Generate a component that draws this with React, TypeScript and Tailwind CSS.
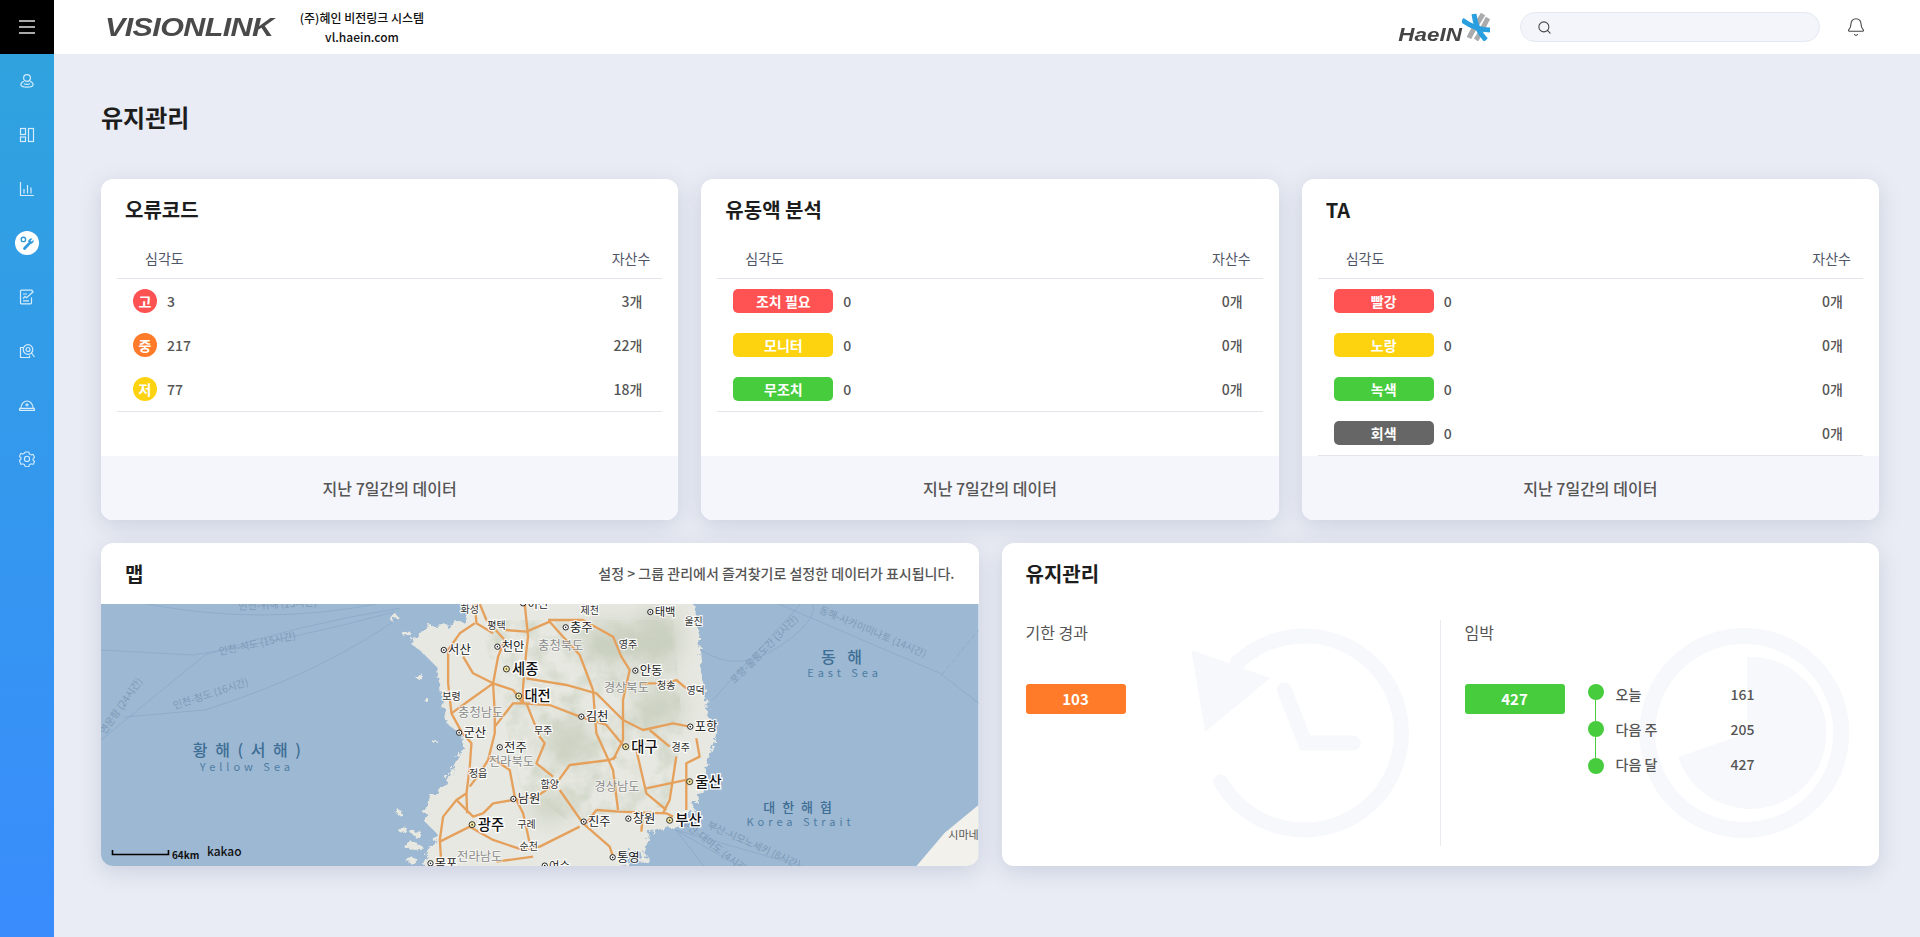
import { Bell, Search } from "lucide-react";

const RED = "bg-[#ff5252]";
const ORANGE = "bg-[#ff7a29]";
const YELLOW = "bg-[#fdd310]";
const GREEN = "bg-[#47cc3e]";
const GRAY = "bg-[#666666]";

const navIcon = "w-[16px] h-[16px] text-[#d5ecfb]";

const SideIcons = [
  <svg key="user" viewBox="0 0 16 16" className={navIcon} fill="none" stroke="currentColor" strokeWidth="1.2">
    <circle cx="8" cy="5" r="3.4" />
    <path d="M5 8.2C3 9 1.9 10.4 1.9 11.8c0 1.5 2.6 2.4 6.1 2.4s6.1-.9 6.1-2.4c0-1.4-1.1-2.8-3.1-3.6" />
    <path d="M5 10.8c1.8.8 4.2.8 6 0" />
  </svg>,
  <svg key="layout" viewBox="0 0 16 16" className={navIcon} fill="none" stroke="currentColor" strokeWidth="1.2">
    <rect x="1.5" y="1.5" width="5" height="6" />
    <rect x="1.5" y="10" width="5" height="4.5" />
    <rect x="9.5" y="1.5" width="5" height="13" />
  </svg>,
  <svg key="chart" viewBox="0 0 16 16" className={navIcon} fill="none" stroke="currentColor" strokeWidth="1.2">
    <path d="M1.5 1v13.5H15" />
    <path d="M5 12.5V8M8.5 12.5V4M12 12.5V6.5" />
  </svg>,
  <span key="tools" className="flex h-[24px] w-[24px] items-center justify-center rounded-full bg-white">
    <svg viewBox="0 0 16 16" className="h-[16px] w-[16px] text-[#2f9ade]" fill="none" stroke="currentColor">
      <circle cx="4.4" cy="4.4" r="2.2" strokeWidth="1.4" />
      <path d="M5.5 13.5 10 8.8" strokeWidth="2.8" strokeLinecap="round" />
      <path d="M9.4 6.5c.2-1.800 1.700-3 3.600-2.700l-1.600 1.800 1.200 1.300 1.800-1.500c.2 1.900-1.300 3.500-3.400 3.300z" fill="currentColor" strokeWidth="0.6" />
    </svg>
  </span>,
  <svg key="sheet" viewBox="0 0 16 16" className={navIcon} fill="none" stroke="currentColor" strokeWidth="1.2">
    <path d="M12.500 8.500v5.500a.8.8 0 0 1-.8.8H2.300a.8.8 0 0 1-.8-.8V2a.8.8 0 0 1 .8-.8h10.200a.8.8 0 0 1 .8.8v1" />
    <path d="M4 5h4M4 11.800h6M4 9.500l2-2 1.500 1.300L14.500 2.500" />
  </svg>,
  <svg key="inspect" viewBox="0 0 16 16" className={navIcon} fill="none" stroke="currentColor" strokeWidth="1.2">
    <path d="M4.500 4.500H1.500v10h9v-2" />
    <circle cx="9" cy="6.500" r="4.800" />
    <circle cx="9" cy="6.500" r="2" />
    <path d="m12.500 10 3 4" />
  </svg>,
  <svg key="helmet" viewBox="0 0 16 16" className={navIcon} fill="none" stroke="currentColor" strokeWidth="1.2">
    <path d="M2 11c0-3.800 2.600-7 6-7s6 3.200 6 7" />
    <path d="M.8 11.300h14.400l.4 2H.4z" />
    <path d="M8 6.200v3.400M6.300 7.900h3.400" />
  </svg>,
  <svg key="gear" viewBox="0 0 16 16" className={navIcon} fill="none" stroke="currentColor" strokeWidth="1.1">
    <path d="m6.200 1h3.600l.5 2 1.900 1 1.900-.6 1.500 2.900-1.500 1.300v1.600l1.500 1.300-1.500 2.900-1.900-.6-1.900 1-.5 2H6.200l-.5-2-1.900-1-1.900.6L.4 9.500l1.500-1.300V6.600L.4 5.300l1.500-2.900 1.900.6 1.900-1z" />
    <circle cx="8" cy="7.900" r="2.600" />
  </svg>,
];

function Sidebar() {
  return (
    <aside className="flex w-[54px] shrink-0 flex-col bg-linear-to-b from-[#2fa4dc] to-[#3a8cfd]">
      <div className="flex h-[54px] flex-col items-center justify-center gap-[4px] bg-black">
        <span className="h-[2px] w-[16px] bg-[#aaaaaa]" />
        <span className="h-[2px] w-[16px] bg-[#aaaaaa]" />
        <span className="h-[2px] w-[16px] bg-[#aaaaaa]" />
      </div>
      {SideIcons.map((icon, i) => (
        <div key={i} className="flex h-[54px] items-center justify-center">
          {icon}
        </div>
      ))}
    </aside>
  );
}

function Header() {
  return (
    <header className="flex h-[54px] items-center bg-white">
      <span className="ml-[51px] w-[192px] origin-left scale-x-[1.22] font-['Liberation_Sans',sans-serif] text-[25px] font-bold italic leading-none tracking-[-0.5px] text-[#4a4a4a]">
        VISIONLINK
      </span>
      <div className="w-[130px] whitespace-nowrap text-center text-[12px] font-medium leading-[19px] text-[#111]">
        <div>(주)혜인 비전링크 시스템</div>
        <div>vl.haein.com</div>
      </div>
      <div className="ml-auto flex items-center">
        <span className="origin-right scale-x-[1.18] pt-[15px] font-['Liberation_Sans',sans-serif] text-[19px] font-bold italic leading-none text-[#444]">
          HaeIN
        </span>
        <svg viewBox="0 0 28 28" className="h-[28px] w-[28px]" fill="none" strokeWidth="5">
          <path d="M21 1C17 8 10 18 7 25" stroke="#a9abad" />
          <path d="M26 5C22 12 19 20 14 27" stroke="#a9abad" />
          <path d="M12 1C13 10 17 20 24 27" stroke="#2a9fe0" />
          <path d="M0 7C8 13 18 17 28 17" stroke="#2a9fe0" />
        </svg>
        <div className="ml-[30px] flex h-[30px] w-[300px] items-center rounded-full border border-[#e4e8f2] bg-[#f3f5fb] pl-[16px]">
          <Search className="h-[15px] w-[15px] text-[#444]" strokeWidth={1.7} />
        </div>
        <Bell className="ml-[26px] mr-[54px] h-[20px] w-[20px] text-[#444]" strokeWidth={1.3} />
      </div>
    </header>
  );
}

type Row = { badge: string; color: string; count: number; assets: number };

function Card({ title, rows, round }: { title: string; rows: Row[]; round?: boolean }) {
  return (
    <section className="flex flex-col overflow-hidden rounded-xl bg-white shadow-[0_6px_22px_rgba(100,115,150,0.22)]">
      <h2 className="h-[59px] pl-[24px] pt-[16px] text-[20px] font-bold leading-[30px] text-[#1d1d1d]">{title}</h2>
      <div className="mx-[16px] flex-1">
        <div className="flex h-[41px] items-center justify-between border-b border-[#e2e5ea] pl-[28px] pr-[12px] text-[14px] text-[#4f5668]">
          <span>심각도</span>
          <span>자산수</span>
        </div>
        <div className="border-b border-[#e2e5ea]">
          {rows.map((r) => (
            <div key={r.badge} className="flex h-[44px] items-center pl-[16px] pr-[20px] text-[14px] font-medium text-[#555]">
              <span
                className={`flex h-[24px] items-center justify-center text-[14px] font-bold text-white ${r.color} ${
                  round ? "w-[24px] rounded-full" : "w-[100px] rounded-[5px]"
                }`}
              >
                {r.badge}
              </span>
              <span className="ml-[10px]">{r.count}</span>
              <span className="ml-auto">{r.assets}개</span>
            </div>
          ))}
        </div>
      </div>
      <div className="flex h-[64px] shrink-0 items-center justify-center bg-[#f5f6fc] text-[16px] font-medium text-[#555]">
        지난 7일간의 데이터
      </div>
    </section>
  );
}

const LAND =
  "M240 0H945L955 80 960 130 965 200 975 280 985 350 1010 390 1005 430 985 480 975 540 960 590 930 640 895 690 860 680 810 700 790 760 750 745 720 830H130L130 790 170 700 130 660 150 600 190 560 220 500 250 440 240 400 200 370 190 320 180 260 170 200 130 160 90 130 140 80 240 70 270 50Z";

const roads = [
  "M205 150 205 250 215 340 245 395 275 430 270 500 260 580 230 600 190 650 180 720 185 795",
  "M300 12 320 60 375 120 355 170 340 250 345 340 345 400 325 480 300 520 270 560",
  "M435 12 445 110 440 150 430 260 430 310",
  "M505 60 610 60 700 110 725 170 750 210 730 300 730 420 700 480",
  "M375 90 440 95 510 65 550 110 600 165 640 270 650 400 700 510 715 630",
  "M430 310 510 315 600 350 680 375 730 435",
  "M440 235 560 255 650 280 730 360 790 390 880 370 930 380",
  "M810 390 870 440M770 450 800 580 860 630",
  "M950 415 960 470 920 490 920 630",
  "M890 470 870 600 850 640",
  "M800 565 920 540",
  "M650 630 720 635 860 640 880 650",
  "M620 670 650 630M540 570 610 670 690 740 700 770",
  "M180 725 270 680 340 720 430 750 480 740 600 680",
  "M310 640 340 610 400 600 470 590 530 550 570 495 690 480 710 470",
  "M230 600 280 650 310 640",
  "M340 250 270 300 215 340",
  "M250 170 280 220 340 250 400 270 430 310 400 310 345 380",
  "M440 310 480 410 495 430 470 490 520 530",
  "M330 470 390 510 405 590 430 640 450 730",
  "M780 250 860 250 890 240 920 265",
  "M460 770 350 785",
  "M285 70 240 100 205 150M285 12 290 70 340 100",
  "M790 640 785 695M260 580 262 640",
];

const cities: [number, number, string, number][] = [
  [192, 150, "서산", 36], [353, 140, "천안", 36], [558, 82, "충주", 36], [812, 36, "태백", 33],
  [767, 212, "안동", 36], [605, 350, "김천", 36], [932, 380, "포항", 36], [238, 398, "군산", 36],
  [360, 442, "전주", 36], [401, 597, "남원", 36], [612, 665, "진주", 36], [746, 656, "창원", 36],
  [699, 772, "통영", 36], [152, 790, "목포", 36], [495, 797, "여수", 33], [430, 10, "이천", 33],
];

const bigCities: [number, number, string][] = [
  [380, 207, "세종"], [417, 288, "대전"], [738, 440, "대구"], [930, 545, "울산"], [277, 674, "광주"], [870, 661, "부산"],
];

const towns: [number, number, string][] = [
  [270, 28, "화성"], [630, 32, "제천"], [350, 78, "평택"], [942, 65, "울진"], [745, 133, "영주"],
  [860, 258, "청송"], [948, 272, "영덕"], [215, 290, "보령"], [490, 392, "무주"], [903, 443, "경주"],
  [295, 520, "정읍"], [510, 553, "함양"], [440, 673, "구례"], [447, 740, "순천"],
];

const provinces: [number, number, string][] = [
  [543, 138, "충청북도"], [740, 265, "경상북도"], [303, 340, "충청남도"], [395, 487, "전라북도"],
  [712, 562, "경상남도"], [300, 772, "전라남도"],
];

const routes: [number, number, number, string][] = [
  [177, 4, -3, "인천-위해 (13시간)"],
  [157, 43, -12, "인천-석도 (15시간)"],
  [111, 93, -18, "인천-청도 (16시간)"],
  [23, 104, -55, "연운항 (24시간)"],
  [666, 48, -45, "포항-울릉도간 (3시간)"],
  [771, 31, 23, "동해-사카이미나토 (14시간)"],
  [652, 244, 24, "부산-시모노세키 (8시간)"],
  [612, 245, 38, "부산-대마도 (4시간)"],
];

const islands: [number, number, number, number][] = [
  [100, 740, 26, 10], [70, 690, 14, 8], [60, 640, 9, 6], [110, 700, 14, 9], [95, 780, 18, 8],
  [640, 775, 30, 12], [560, 790, 22, 10], [600, 755, 12, 8], [790, 775, 14, 16], [740, 790, 10, 8],
  [120, 230, 12, 8], [140, 300, 8, 6], [80, 100, 14, 8], [40, 50, 16, 6], [170, 430, 8, 5],
];

function KoreaMap() {
  return (
    <svg viewBox="0 0 878 262" className="block h-full w-full" preserveAspectRatio="none">
      <defs>
        <filter id="coast" x="-5%" y="-5%" width="110%" height="110%">
          <feTurbulence type="fractalNoise" baseFrequency="0.05" numOctaves="4" seed="4" />
          <feDisplacementMap in="SourceGraphic" scale="34" />
        </filter>
        <filter id="mottle" x="0" y="0" width="100%" height="100%">
          <feTurbulence type="fractalNoise" baseFrequency="0.018" numOctaves="5" seed="11" />
          <feColorMatrix values="0 0 0 0 0.56  0 0 0 0 0.62  0 0 0 0 0.5  0 0 0 2.6 -1.05" />
          <feComposite in2="SourceAlpha" operator="in" />
        </filter>
        <filter id="soft" x="-60%" y="-60%" width="220%" height="220%">
          <feGaussianBlur stdDeviation="34" />
        </filter>
      </defs>
      <rect width="878" height="262" fill="#9db8d2" />
      <g fill="none" stroke="#8aa9c9" strokeWidth="0.8">
        <path d="M46 0Q161 22 276 0" />
        <path d="M0 46 92 51Q190 36 293 8" />
        <path d="M0 136 104 51Q200 20 300 4" />
        <path d="M23 113 104 106Q219 70 299 13" />
        <path d="M600 46Q638 70 678 43T712 0" />
        <path d="M678 0 839 69 878 99" />
        <path d="M612 96 700 0" />
        <path d="M841 71 878 26" strokeDasharray="5 3" />
        <path d="M575 226 701 262M575 226 638 262M575 226 603 262" />
      </g>
      <g fontSize="10" fill="#7d9ab8" textAnchor="middle">
        {routes.map(([x, y, a, t]) => (
          <text key={t} x={x} y={y} transform={`rotate(${a} ${x} ${y})`}>
            {t}
          </text>
        ))}
      </g>
      <path d="M878 201 844 229 816 262H878Z" fill="#f2f1ec" />
      <text x="863" y="235" fontSize="11" textAnchor="middle" fill="#555">시마네</text>
      <g fill="#3d6e95" textAnchor="middle">
        <text x="147" y="152" fontSize="16" fontWeight="500" letterSpacing="2">황 해 ( 서 해 )</text>
        <text x="146" y="167" fontSize="11" letterSpacing="4" fill="#4d7da3">Yellow Sea</text>
        <text x="743" y="59" fontSize="16" fontWeight="500" letterSpacing="4">동 해</text>
        <text x="744" y="73" fontSize="11" letterSpacing="4" fill="#4d7da3">East Sea</text>
        <text x="698" y="208" fontSize="13" fontWeight="500" letterSpacing="2">대 한 해 협</text>
        <text x="700" y="222" fontSize="11" letterSpacing="4" fill="#4d7da3">Korea Strait</text>
      </g>
      <g transform="translate(279 -4) scale(0.3333)">
        <g filter="url(#coast)">
          <path d={LAND} fill="#e7e8e1" />
          <g fill="#e7e8e1">
            {islands.map(([cx, cy, rx, ry]) => (
              <ellipse key={`${cx}-${cy}`} cx={cx} cy={cy} rx={rx} ry={ry} />
            ))}
          </g>
        </g>
        <g filter="url(#soft)" fill="#b3bda6" opacity="0.55">
          <ellipse cx="510" cy="620" rx="60" ry="40" />
          <ellipse cx="570" cy="430" rx="70" ry="60" />
          <ellipse cx="690" cy="130" rx="90" ry="60" />
          <ellipse cx="830" cy="120" rx="70" ry="90" />
          <ellipse cx="840" cy="320" rx="70" ry="60" />
        </g>
        <path d="M300 60H880L910 400 860 620 560 660 420 560 360 300Z" filter="url(#mottle)" opacity="0.55" />
        <g fill="none" stroke="#e5a05c" strokeWidth="7" strokeLinejoin="round">
          {roads.map((d) => (
            <path key={d} d={d} />
          ))}
        </g>
        <g
          textAnchor="middle"
          fill="#8a8a8a"
          fontSize="37"
          stroke="#ffffff"
          strokeOpacity="0.6"
          strokeWidth="5"
          style={{ paintOrder: "stroke" }}
        >
          {provinces.map(([x, y, t]) => (
            <text key={t} x={x} y={y + 12}>{t}</text>
          ))}
        </g>
        <g
          textAnchor="middle"
          fill="#333"
          fontSize="30"
          stroke="#ffffff"
          strokeWidth="7"
          strokeOpacity="0.85"
          style={{ paintOrder: "stroke" }}
        >
          {towns.map(([x, y, t]) => (
            <text key={t} x={x} y={y + 10}>{t}</text>
          ))}
        </g>
        {cities.map(([x, y, t, s]) => (
          <g key={t}>
            <circle cx={x} cy={y} r="8" fill="#fff" stroke="#222" strokeWidth="3" />
            <circle cx={x} cy={y} r="2.500" fill="#222" />
            <text x={x + 13} y={y + 13} fontSize={s + 1} fill="#222" stroke="#fff" strokeWidth="7" strokeOpacity="0.85" style={{ paintOrder: "stroke" }}>
              {t}
            </text>
          </g>
        ))}
        {bigCities.map(([x, y, t]) => (
          <g key={t}>
            <circle cx={x} cy={y} r="9" fill="#f7e9a0" stroke="#333" strokeWidth="3" />
            <circle cx={x} cy={y} r="2.500" fill="#333" />
            <text x={x + 17} y={y + 15} fontSize="43" fontWeight="500" fill="#111" stroke="#fff" strokeWidth="8" style={{ paintOrder: "stroke" }}>
              {t}
            </text>
          </g>
        ))}
      </g>
      <path d="M11.500 246v4.500h56v-4.500" fill="none" stroke="#000" strokeWidth="1.600" />
      <text x="71" y="255" fontSize="10" fontWeight="700" fill="#111">64km</text>
      <text x="106" y="252" fontSize="12" fontWeight="500" fill="#111">kakao</text>
    </svg>
  );
}

function MapCard() {
  return (
    <section className="flex flex-col overflow-hidden rounded-xl bg-white shadow-[0_6px_22px_rgba(100,115,150,0.22)]">
      <div className="flex h-[61px] shrink-0 items-center justify-between px-[24px]">
        <h2 className="text-[20px] font-bold text-[#1d1d1d]">맵</h2>
        <span className="text-[14px] font-medium text-[#555]">설정 &gt; 그룹 관리에서 즐겨찾기로 설정한 데이터가 표시됩니다.</span>
      </div>
      <div className="min-h-0 flex-1">
        <KoreaMap />
      </div>
    </section>
  );
}

const dueRows = [
  ["오늘", 161],
  ["다음 주", 205],
  ["다음 달", 427],
] as const;

function MaintenanceCard() {
  return (
    <section className="relative flex flex-col overflow-hidden rounded-xl bg-white shadow-[0_6px_22px_rgba(100,115,150,0.22)]">
      <svg viewBox="0 0 877 323" className="pointer-events-none absolute inset-0 h-full w-full" fill="none">
        <path d="M235 120A97 97 0 1 1 218.500 239" stroke="#f7f8fc" strokeWidth="15" strokeLinecap="round" />
        <path d="M189 107 268 135 203 189Z" fill="#f7f8fc" />
        <path d="M282 147 303 200H351" stroke="#f7f8fc" strokeWidth="15" strokeLinecap="round" />
        <circle cx="742" cy="190" r="97" stroke="#f7f8fc" strokeWidth="16" />
        <path d="M745 190V114A76 76 0 1 1 676 214Z" fill="#f7f8fc" />
      </svg>
      <h2 className="relative h-[61px] shrink-0 pl-[24px] pt-[16px] text-[20px] font-bold leading-[30px] text-[#1d1d1d]">유지관리</h2>
      <div className="relative mt-[16px] flex h-[226px]">
        <div className="w-[438px] pl-[24px]">
          <div className="-mt-[1px] text-[16px] leading-[26px] text-[#555]">기한 경과</div>
          <div className={`mt-[39px] flex h-[30px] w-[100px] items-center justify-center rounded-[3px] text-[15px] font-bold text-white ${ORANGE}`}>
            103
          </div>
        </div>
        <div className="flex-1 border-l border-[#e9ebf0] pl-[24px]">
          <div className="-mt-[1px] text-[16px] leading-[26px] text-[#555]">임박</div>
          <div className="mt-[39px] flex">
            <div className={`flex h-[30px] w-[100px] items-center justify-center rounded-[3px] text-[15px] font-bold text-white ${GREEN}`}>
              427
            </div>
            <div className="ml-[23px] flex w-[16px] flex-col items-center">
              <span className={`h-[16px] w-[16px] rounded-full ${GREEN}`} />
              <span className={`h-[21px] w-px ${GREEN}`} />
              <span className={`h-[16px] w-[16px] rounded-full ${GREEN}`} />
              <span className={`h-[21px] w-px ${GREEN}`} />
              <span className={`h-[16px] w-[16px] rounded-full ${GREEN}`} />
            </div>
            <div className="ml-[12px] -mt-[7px] w-[139px] text-[14px] font-medium text-[#555]">
              {dueRows.map(([label, value]) => (
                <div key={label} className="flex h-[35px] items-center">
                  <span className="w-[115px]">{label}</span>
                  <span>{value}</span>
                </div>
              ))}
            </div>
          </div>
        </div>
      </div>
    </section>
  );
}

export default function App() {
  return (
    <div className="flex h-screen overflow-hidden bg-[#e9ecf4] font-['Noto_Sans_CJK_KR','Noto_Sans',sans-serif]">
      <Sidebar />
      <div className="flex min-w-0 flex-1 flex-col">
        <Header />
        <main className="pl-[47px] pr-[41px] pt-[46px]">
          <h1 className="mb-[45px] h-[34px] text-[24px] font-bold leading-[34px] text-[#1d1d1d]">유지관리</h1>
          <div className="grid h-[341px] grid-cols-3 gap-[23px]">
            <Card
              round
              title="오류코드"
              rows={[
                { badge: "고", color: RED, count: 3, assets: 3 },
                { badge: "중", color: ORANGE, count: 217, assets: 22 },
                { badge: "저", color: YELLOW, count: 77, assets: 18 },
              ]}
            />
            <Card
              title="유동액 분석"
              rows={[
                { badge: "조치 필요", color: RED, count: 0, assets: 0 },
                { badge: "모니터", color: YELLOW, count: 0, assets: 0 },
                { badge: "무조치", color: GREEN, count: 0, assets: 0 },
              ]}
            />
            <Card
              title="TA"
              rows={[
                { badge: "빨강", color: RED, count: 0, assets: 0 },
                { badge: "노랑", color: YELLOW, count: 0, assets: 0 },
                { badge: "녹색", color: GREEN, count: 0, assets: 0 },
                { badge: "회색", color: GRAY, count: 0, assets: 0 },
              ]}
            />
          </div>
          <div className="mt-[23px] grid h-[323px] grid-cols-2 gap-[23px]">
            <MapCard />
            <MaintenanceCard />
          </div>
        </main>
      </div>
    </div>
  );
}
